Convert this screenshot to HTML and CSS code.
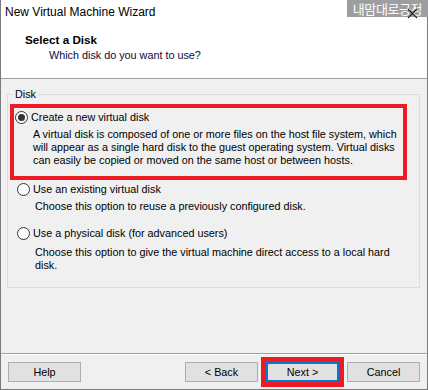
FILE: index.html
```html
<!DOCTYPE html>
<html lang="en">
<head>
    <meta charset="UTF-8">
    <title>New Virtual Machine Wizard</title>
    <link rel="stylesheet" href="styles.css">
</head>
<body>
    <div class="window">
        <div class="watermark">내맘대로긍정</div>
        <svg class="close" width="11" height="11" viewBox="0 0 11 11">
            <path d="M1 1 L10 10 M10 1 L1 10" stroke="#222" stroke-width="1.1" fill="none"/>
        </svg>
        <div class="header">
            <div class="title">New Virtual Machine Wizard</div>
            <div class="heading">Select a Disk</div>
            <div class="sub">Which disk do you want to use?</div>
        </div>
        <div class="content">
            <div class="group">
                <span class="group-title">Disk</span>
                <div class="highlight">
                    <div class="option">
                        <svg class="radio" width="13" height="13" viewBox="0 0 13 13">
                            <circle cx="6.5" cy="6.5" r="6" fill="#fff" stroke="#333"/>
                            <circle cx="6.5" cy="6.5" r="3.5" fill="#333"/>
                        </svg>
                        <span>Create a new virtual disk</span>
                    </div>
                    <p class="desc">A virtual disk is composed of one or more files on the host file system, which<br>will appear as a single hard disk to the guest operating system. Virtual disks<br>can easily be copied or moved on the same host or between hosts.</p>
                </div>
                <div class="option second">
                    <svg class="radio" width="13" height="13" viewBox="0 0 13 13">
                        <circle cx="6.5" cy="6.5" r="6" fill="#fff" stroke="#333"/>
                    </svg>
                    <span>Use an existing virtual disk</span>
                </div>
                <p class="desc outer">Choose this option to reuse a previously configured disk.</p>
                <div class="option third">
                    <svg class="radio" width="13" height="13" viewBox="0 0 13 13">
                        <circle cx="6.5" cy="6.5" r="6" fill="#fff" stroke="#333"/>
                    </svg>
                    <span>Use a physical disk (for advanced users)</span>
                </div>
                <p class="desc outer last">Choose this option to give the virtual machine direct access to a local hard<br>disk.</p>
            </div>
        </div>
        <div class="footer">
            <button class="btn">Help</button>
            <button class="btn back">&lt; Back</button>
            <button class="btn next">Next &gt;</button>
            <button class="btn">Cancel</button>
        </div>
    </div>
</body>
</html>
```

FILE: styles.css
```css
body {
    margin: 0;
    font-family: 'Liberation Sans', Arial, sans-serif;
    font-size: 10.8px;
    color: #000;
    background: #f0f0f0;
}
.window {
    position: relative;
    width: 428px;
    height: 390px;
    box-sizing: border-box;
    border-left: 1px solid #7a7a7a;
    border-right: 1px solid #7a7a7a;
    border-bottom: 1px solid #7a7a7a;
    display: flex;
    flex-direction: column;
    background: #f0f0f0;
}
.watermark {
    position: absolute;
    top: 0;
    right: -1px;
    width: 81px;
    height: 17px;
    background: #9c9ea2;
    color: #fff;
    font-family: 'Noto Sans CJK KR', sans-serif;
    font-size: 13px;
    line-height: 17px;
    text-align: center;
    letter-spacing: -0.4px;
    white-space: nowrap;
}
.close {
    position: absolute;
    top: 8px;
    left: 406px;
}
.header {
    height: 79px;
    box-sizing: border-box;
    background: #fff;
    border-bottom: 1px solid #a0a0a0;
}
.title {
    padding-left: 4px;
    font-size: 12px;
    line-height: 25px;
}
.heading {
    margin-top: 7px;
    padding-left: 24px;
    font-size: 11.7px;
    font-weight: bold;
    line-height: 15px;
}
.sub {
    margin-top: 1px;
    padding-left: 48px;
    line-height: 15px;
    color: #0a0a3a;
}
.content {
    flex: 1;
    padding: 15px 7px 0 6px;
}
.group {
    position: relative;
    border: 1px solid #dcdcdc;
    padding: 9px 12px 15px 2px;
}
.group-title {
    position: absolute;
    top: -8px;
    left: 5px;
    padding: 0 2px;
    line-height: 15px;
    background: #f0f0f0;
}
.highlight {
    border: 4px solid #ed1c24;
    padding: 2px 0 9px 1px;
}
.option {
    display: flex;
    align-items: center;
    gap: 3px;
    height: 15px;
    line-height: 15px;
}
.option.second {
    margin: 2px 0 0 7px;
}
.option.third {
    margin: 13px 0 0 7px;
}
.desc {
    margin: 3px 0 0 18px;
    line-height: 13px;
}
.desc.outer {
    margin-left: 25px;
}
.desc.last {
    margin-top: 5px;
}
.footer {
    height: 36px;
    box-sizing: border-box;
    border-top: 1px solid #a0a0a0;
    box-shadow: inset 0 1px 0 #fff;
    display: flex;
    gap: 8px;
    padding: 8px 7px 0 7px;
}
.btn {
    width: 73px;
    height: 20px;
    padding: 0;
    border: 1px solid #adadad;
    background: #e1e1e1;
    font-family: 'Liberation Sans', Arial, sans-serif;
    font-size: 10.8px;
    color: #000;
}
.back {
    margin-left: auto;
}
.next {
    border-color: #0078d7;
    box-shadow: inset 0 0 0 1px #0078d7;
    outline: 5px solid #ed1c24;
}
```
